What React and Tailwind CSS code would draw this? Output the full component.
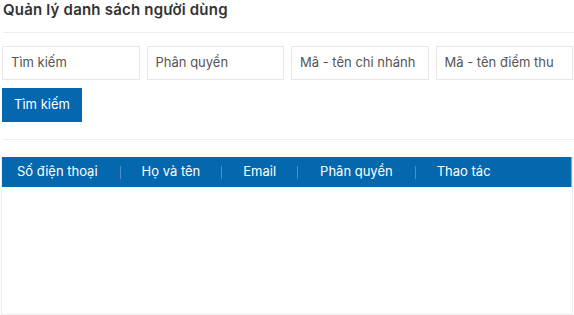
import React from "react";

function Field({ placeholder }) {
  return (
    <div className="flex h-[34px] flex-1 items-center border border-[#e8e8e8] bg-white pl-[8px] text-[13px] text-[#555]">
      {placeholder}
    </div>
  );
}

const cols = ["Số điện thoại", "Họ và tên", "Email", "Phân quyền", "Thao tác"];

export default function App() {
  return (
    <div className="h-[315px] w-[574px] overflow-hidden bg-white font-['Inter',sans-serif]">
      <div className="pl-[3px] pt-[1px] text-[15px] font-semibold leading-[18px] tracking-[0.2px] text-[#333]">
        Quản lý danh sách người dùng
      </div>
      <div className="ml-[3px] mt-[13px] h-px bg-[#eeeeee]" />
      <div className="mt-[13px] flex gap-[7px] pl-[2px] pr-[1px]">
        {["Tìm kiếm", "Phân quyền", "Mã - tên chi nhánh", "Mã - tên điểm thu"].map((p) => (
          <Field key={p} placeholder={p} />
        ))}
      </div>
      <div className="mt-[8px] pl-[2px]">
        <button className="flex h-[34px] w-[80px] items-center justify-center bg-[#0567ad] text-[13px] text-white">
          Tìm kiếm
        </button>
      </div>
      <div className="ml-[3px] mt-[17px] h-px bg-[#eeeeee]" />
      <div className="ml-[1px] mr-[1px] mt-[17px] flex h-[158px] flex-col border border-t-0 border-[#eeeeee]">
        <div className="flex h-[30px] items-center border-r border-[#7fb1d6] bg-[#0567ad] text-[13px] text-white">
          {cols.map((c, i) => (
            <React.Fragment key={c}>
              {i > 0 && <div className="h-[13px] w-px bg-[#4d8fc4]" />}
              <div className={i === 0 ? "pl-[15px] pr-[22px]" : i === 3 ? "px-[22px]" : "px-[21px]"}>{c}</div>
            </React.Fragment>
          ))}
        </div>
        <div className="flex-1" />
      </div>
    </div>
  );
}
